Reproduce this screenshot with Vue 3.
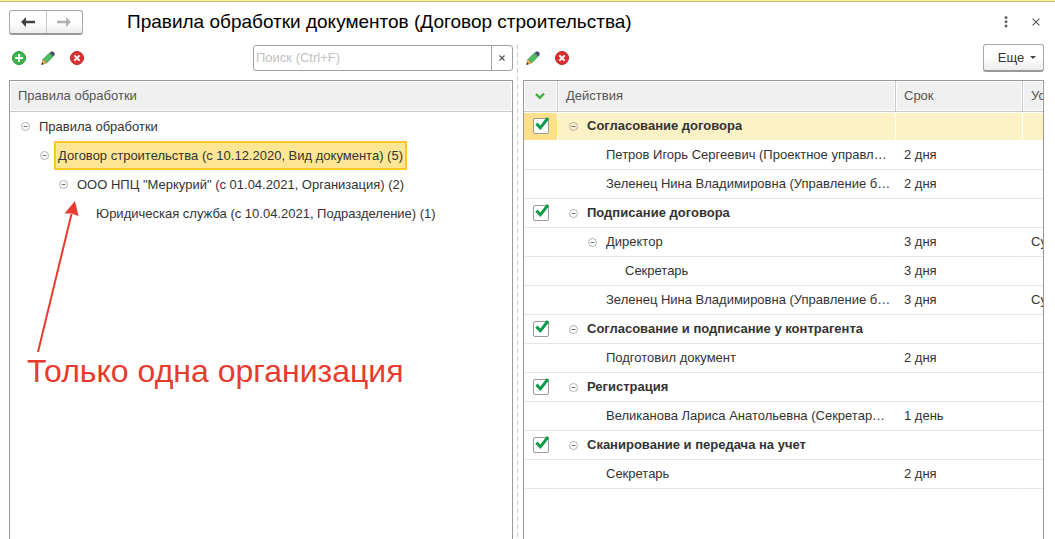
<script setup>
import { ref } from 'vue'

const query = ref('')

const tree = [
  { level: 0, text: 'Правила обработки', open: true },
  { level: 1, text: 'Договор строительства (с 10.12.2020, Вид документа) (5)', open: true, selected: true },
  { level: 2, text: 'ООО НПЦ "Меркурий" (с 01.04.2021, Организация) (2)', open: true },
  { level: 3, text: 'Юридическая служба (с 10.04.2021, Подразделение) (1)' },
]

const actions = ref([
  { level: 0, text: 'Согласование договора', group: true, checked: true, current: true },
  { level: 1, text: 'Петров Игорь Сергеевич (Проектное управл…', term: '2 дня' },
  { level: 1, text: 'Зеленец Нина Владимировна (Управление б…', term: '2 дня' },
  { level: 0, text: 'Подписание договора', group: true, checked: true },
  { level: 1, text: 'Директор', open: true, term: '3 дня', cond: 'Су' },
  { level: 2, text: 'Секретарь', term: '3 дня' },
  { level: 1, text: 'Зеленец Нина Владимировна (Управление б…', term: '3 дня', cond: 'Су' },
  { level: 0, text: 'Согласование и подписание у контрагента', group: true, checked: true },
  { level: 1, text: 'Подготовил документ', term: '2 дня' },
  { level: 0, text: 'Регистрация', group: true, checked: true },
  { level: 1, text: 'Великанова Лариса Анатольевна (Секретар…', term: '1 день' },
  { level: 0, text: 'Сканирование и передача на учет', group: true, checked: true },
  { level: 1, text: 'Секретарь', term: '2 дня' },
])
</script>

<template>
  <div class="window">
    <header class="titlebar">
      <div class="nav">
        <button type="button" aria-label="Назад">
          <svg width="14" height="10" viewBox="0 0 14 10"><path d="M0 5 5 0V3.7H14V6.3H5V10Z" fill="#404040" /></svg>
        </button>
        <button type="button" aria-label="Вперед">
          <svg width="14" height="10" viewBox="0 0 14 10"><path d="M14 5 9 0V3.7H0V6.3H9V10Z" fill="#b0b0b0" /></svg>
        </button>
      </div>
      <h1>Правила обработки документов (Договор строительства)</h1>
      <button class="icon" type="button" aria-label="Меню">
        <svg width="16" height="16" viewBox="0 0 16 16" fill="#666"><circle cx="8" cy="3.5" r="1.5" /><circle cx="8" cy="7.8" r="1.5" /><circle cx="8" cy="12.1" r="1.5" /></svg>
      </button>
      <button class="icon close" type="button" aria-label="Закрыть">
        <svg width="16" height="16" viewBox="0 0 16 16"><path d="M4.6 4.6 11.4 11.4M11.4 4.6 4.6 11.4" stroke="#555" stroke-width="1.1" /></svg>
      </button>
    </header>

    <main class="panes">
      <section class="pane left">
        <div class="toolbar">
          <button class="icon" type="button" aria-label="Добавить">
            <svg width="16" height="16" viewBox="0 0 16 16"><circle cx="8" cy="8" r="6.5" fill="#3db54a" stroke="#259a3c" /><path d="M8 4V12M4 8H12" stroke="#fff" stroke-width="2" /></svg>
          </button>
          <button class="icon" type="button" aria-label="Изменить">
            <svg width="16" height="16" viewBox="0 0 16 16"><path d="M3 9.4 9.4 3 13 6.6 6.6 13Z" fill="#4dbb5f" stroke="#2f8a43" stroke-width=".7" /><path d="M9.6 2.9 11.1 1.4H13L14.6 3V4.9L13.1 6.4Z" fill="#4a4a6a" /><path d="M2.9 9.4 6.6 13.1 2 14.4Z" fill="#f0b45c" stroke="#a87432" stroke-width=".6" /><path d="M2 12.3 3.8 14.1 1.2 14.9Z" fill="#333" /></svg>
          </button>
          <button class="icon" type="button" aria-label="Удалить">
            <svg width="16" height="16" viewBox="0 0 16 16"><circle cx="8" cy="8" r="6.5" fill="#dd3035" stroke="#bd2428" /><path d="M5.4 5.4 10.6 10.6M10.6 5.4 5.4 10.6" stroke="#fff" stroke-width="1.9" /></svg>
          </button>
          <div class="search">
            <input v-model="query" type="text" placeholder="Поиск (Ctrl+F)" aria-label="Поиск (Ctrl+F)" />
            <button type="button" aria-label="Очистить" @click="query = ''">
              <svg width="8" height="8" viewBox="0 0 8 8"><path d="M1.5 1.5 6.5 6.5M6.5 1.5 1.5 6.5" stroke="#555" stroke-width="1.2" /></svg>
            </button>
          </div>
        </div>
        <div class="grid">
          <div class="grid-head">Правила обработки</div>
          <ul class="tree">
            <li v-for="row in tree" :key="row.text" :class="'level-' + row.level">
              <button v-if="row.open" class="toggle" type="button" aria-label="Свернуть">
                <svg width="9" height="9" viewBox="0 0 9 9"><circle cx="4.5" cy="4.5" r="4" fill="#fff" stroke="#b0b0b0" /><path d="M2.5 4.5H6.5" stroke="#777" /></svg>
              </button>
              <span v-else class="toggle"></span>
              <span class="node" :class="{ selected: row.selected }">{{ row.text }}</span>
            </li>
          </ul>
          <div class="note">
            <svg width="44" height="154" viewBox="0 0 44 154"><path d="M2 152 35.5 14" stroke="#e63b2e" stroke-width="2" /><path d="M39 1 42.5 16 35.5 13.5 28.5 13.5Z" fill="#e63b2e" /></svg>
            <p>Только одна организация</p>
          </div>
        </div>
      </section>

      <div class="splitter"></div>

      <section class="pane right">
        <div class="toolbar">
          <button class="icon" type="button" aria-label="Изменить действие">
            <svg width="16" height="16" viewBox="0 0 16 16"><path d="M3 9.4 9.4 3 13 6.6 6.6 13Z" fill="#4dbb5f" stroke="#2f8a43" stroke-width=".7" /><path d="M9.6 2.9 11.1 1.4H13L14.6 3V4.9L13.1 6.4Z" fill="#4a4a6a" /><path d="M2.9 9.4 6.6 13.1 2 14.4Z" fill="#f0b45c" stroke="#a87432" stroke-width=".6" /><path d="M2 12.3 3.8 14.1 1.2 14.9Z" fill="#333" /></svg>
          </button>
          <button class="icon" type="button" aria-label="Удалить действие">
            <svg width="16" height="16" viewBox="0 0 16 16"><circle cx="8" cy="8" r="6.5" fill="#dd3035" stroke="#bd2428" /><path d="M5.4 5.4 10.6 10.6M10.6 5.4 5.4 10.6" stroke="#fff" stroke-width="1.9" /></svg>
          </button>
          <button class="more" type="button">Еще <span class="caret"></span></button>
        </div>
        <div class="grid">
          <table>
            <colgroup><col class="c-check" /><col /><col class="c-term" /><col class="c-cond" /></colgroup>
            <thead>
              <tr>
                <th class="mark" aria-label="Отметка">
                  <svg width="10" height="8" viewBox="0 0 10 8"><path d="M1 2 4.8 5.8 9 1.6" fill="none" stroke="#3fb23f" stroke-width="2.4" /></svg>
                </th>
                <th>Действия</th>
                <th>Срок</th>
                <th>Ус</th>
              </tr>
            </thead>
            <tbody>
              <tr v-for="(row, i) in actions" :key="i" :class="{ current: row.current }">
                <td class="check">
                  <label v-if="row.group" class="tick">
                    <input v-model="row.checked" type="checkbox" :aria-label="row.text" />
                    <svg v-if="row.checked" width="16" height="15" viewBox="0 0 16 15"><path d="M2.4 6.6 6.4 10.8 14 1" fill="none" stroke="#0a9a48" stroke-width="3" /></svg>
                  </label>
                </td>
                <td class="action">
                  <div class="cell" :class="['level-' + row.level, { group: row.group }]">
                    <button v-if="row.group || row.open" class="toggle" type="button" aria-label="Свернуть">
                      <svg width="9" height="9" viewBox="0 0 9 9"><circle cx="4.5" cy="4.5" r="4" fill="none" stroke="#b0b0b0" /><path d="M2.5 4.5H6.5" stroke="#777" /></svg>
                    </button>
                    <span v-else class="toggle"></span>
                    <span class="label">{{ row.text }}</span>
                  </div>
                </td>
                <td>{{ row.term }}</td>
                <td>{{ row.cond }}</td>
              </tr>
            </tbody>
          </table>
        </div>
      </section>
    </main>
  </div>
</template>

<style>
body {
  margin: 0;
  background: #fff;
}
</style>

<style scoped>
* {
  box-sizing: border-box;
}
.window {
  display: flex;
  flex-direction: column;
  height: 100vh;
  overflow: hidden;
  border-top: 1px solid #fbeaa0;
  font: 13px/18px "Liberation Sans", Arial, sans-serif;
  color: #333;
}
button {
  display: flex;
  align-items: center;
  justify-content: center;
  padding: 0;
  border: 0;
  background: none;
  font: inherit;
  color: inherit;
}
svg {
  display: block;
  flex: none;
}
.titlebar {
  display: flex;
  align-items: center;
  height: 43px;
  padding: 0 11px 2px 9px;
  border-top: 1px solid #cdbf6c;
}
.nav {
  display: flex;
  width: 74px;
  height: 25px;
  border: 1px solid #a8a8a8;
  border-bottom: 2px solid #999;
  border-radius: 3px;
  background: linear-gradient(#fff 50%, #ececec);
}
.nav button {
  flex: 1;
}
.nav button + button {
  border-left: 1px solid #c8c8c8;
}
h1 {
  flex: 1;
  margin: 0 0 0 44px;
  font-size: 19px;
  line-height: 24px;
  font-weight: 400;
  color: #000;
  white-space: nowrap;
}
.icon {
  width: 16px;
  height: 16px;
}
.close {
  margin-left: 14px;
}
.panes {
  display: flex;
  flex: 1;
  min-height: 0;
  padding: 0 11px 0 9px;
}
.pane {
  display: flex;
  flex-direction: column;
  min-width: 0;
}
.left {
  flex: 504 1 0;
}
.right {
  flex: 521 1 0;
}
.splitter {
  width: 1px;
  margin: 0 5px 0 4px;
  background: repeating-linear-gradient(#d0d0d0 0 5px, #fff 5px 8px);
}
.toolbar {
  display: flex;
  align-items: center;
  gap: 13px;
  height: 28px;
  margin-bottom: 8px;
  padding-left: 2px;
}
.search {
  display: flex;
  width: 260px;
  height: 26px;
  margin-left: auto;
  border: 1px solid #a0a0a0;
  border-radius: 3px;
}
.search input {
  flex: 1;
  min-width: 0;
  padding: 0 2px;
  border: 0;
  outline: 0;
  background: none;
  font: inherit;
}
.search input::placeholder {
  color: #c0c0c0;
  opacity: 1;
}
.search button {
  width: 21px;
  border-left: 1px solid #a0a0a0;
}
.more {
  gap: 6px;
  width: 61px;
  height: 28px;
  margin-left: auto;
  padding-left: 7px;
  border: 1px solid #a8a8a8;
  border-bottom: 2px solid #999;
  border-radius: 3px;
  background: linear-gradient(#fff 50%, #ececec);
}
.caret {
  border: 3px solid transparent;
  border-top-color: #444;
  border-bottom: 0;
}
.grid {
  position: relative;
  flex: 1;
  min-height: 0;
  overflow: hidden;
  border: 1px solid #999;
  border-bottom: 0;
}
.grid-head,
th {
  height: 31px;
  padding: 0 8px;
  border-bottom: 1px solid #c8c8c8;
  background: #f0f0f0;
  box-shadow: inset 0 0 0 1px #fff;
  font-weight: 400;
  line-height: 30px;
  text-align: left;
  color: #555;
}
.tree {
  margin: 0;
  padding: 0;
  list-style: none;
}
.tree li {
  display: flex;
  align-items: center;
  height: 29px;
  padding-left: 11px;
  white-space: nowrap;
}
.toggle {
  flex: none;
  width: 9px;
  height: 9px;
}
.node {
  margin-left: 5px;
  padding: 3px 2px;
  border: 2px solid transparent;
  line-height: 19px;
}
.node.selected {
  border-color: #fcc72b;
  background: #ffe694;
}
.tree .level-1 {
  padding-left: 30px;
}
.tree .level-2 {
  padding-left: 49px;
}
.tree .level-3 {
  padding-left: 68px;
}
.note {
  position: absolute;
  top: 119px;
  left: 17px;
  color: #e63b2e;
  white-space: nowrap;
}
.note svg {
  margin-left: 9px;
}
.note p {
  margin: 0;
  font-size: 32px;
  line-height: 34px;
}
table {
  width: 100%;
  table-layout: fixed;
  border-collapse: separate;
  border-spacing: 0;
}
.c-check {
  width: 34px;
}
.c-term {
  width: 127px;
}
.c-cond {
  width: 20px;
}
th,
td {
  overflow: hidden;
  white-space: nowrap;
}
th {
  border-right: 1px solid #c8c8c8;
}
td {
  height: 29px;
  padding: 0 8px;
  border-right: 1px solid #fff;
  border-bottom: 1px solid #e5e5e5;
}
th:last-child,
td:last-child {
  padding-right: 0;
  border-right: 0;
}
.mark {
  padding: 0 11px;
}
.check {
  padding: 6px 9px 0;
  vertical-align: top;
}
.action {
  padding-right: 2px;
}
.current td {
  background: #fdf1c6;
  border-bottom-color: #fff;
  box-shadow: inset 0 1px #fff;
}
.current td.check {
  background: #ffe08a;
}
.tick {
  position: relative;
  display: block;
  width: 16px;
  height: 16px;
}
.tick input {
  display: block;
  width: 16px;
  height: 16px;
  margin: 0;
  appearance: none;
  border: 1px solid #999;
  border-radius: 2px;
  background: #fff;
}
.tick svg {
  position: absolute;
  top: -1px;
  left: 1px;
}
.cell {
  display: flex;
  align-items: center;
  gap: 9px;
  padding-left: 3px;
}
.cell.level-1 {
  padding-left: 22px;
}
.cell.level-2 {
  padding-left: 41px;
}
.label {
  overflow: hidden;
  text-overflow: ellipsis;
}
.group {
  font-weight: 700;
}
</style>
